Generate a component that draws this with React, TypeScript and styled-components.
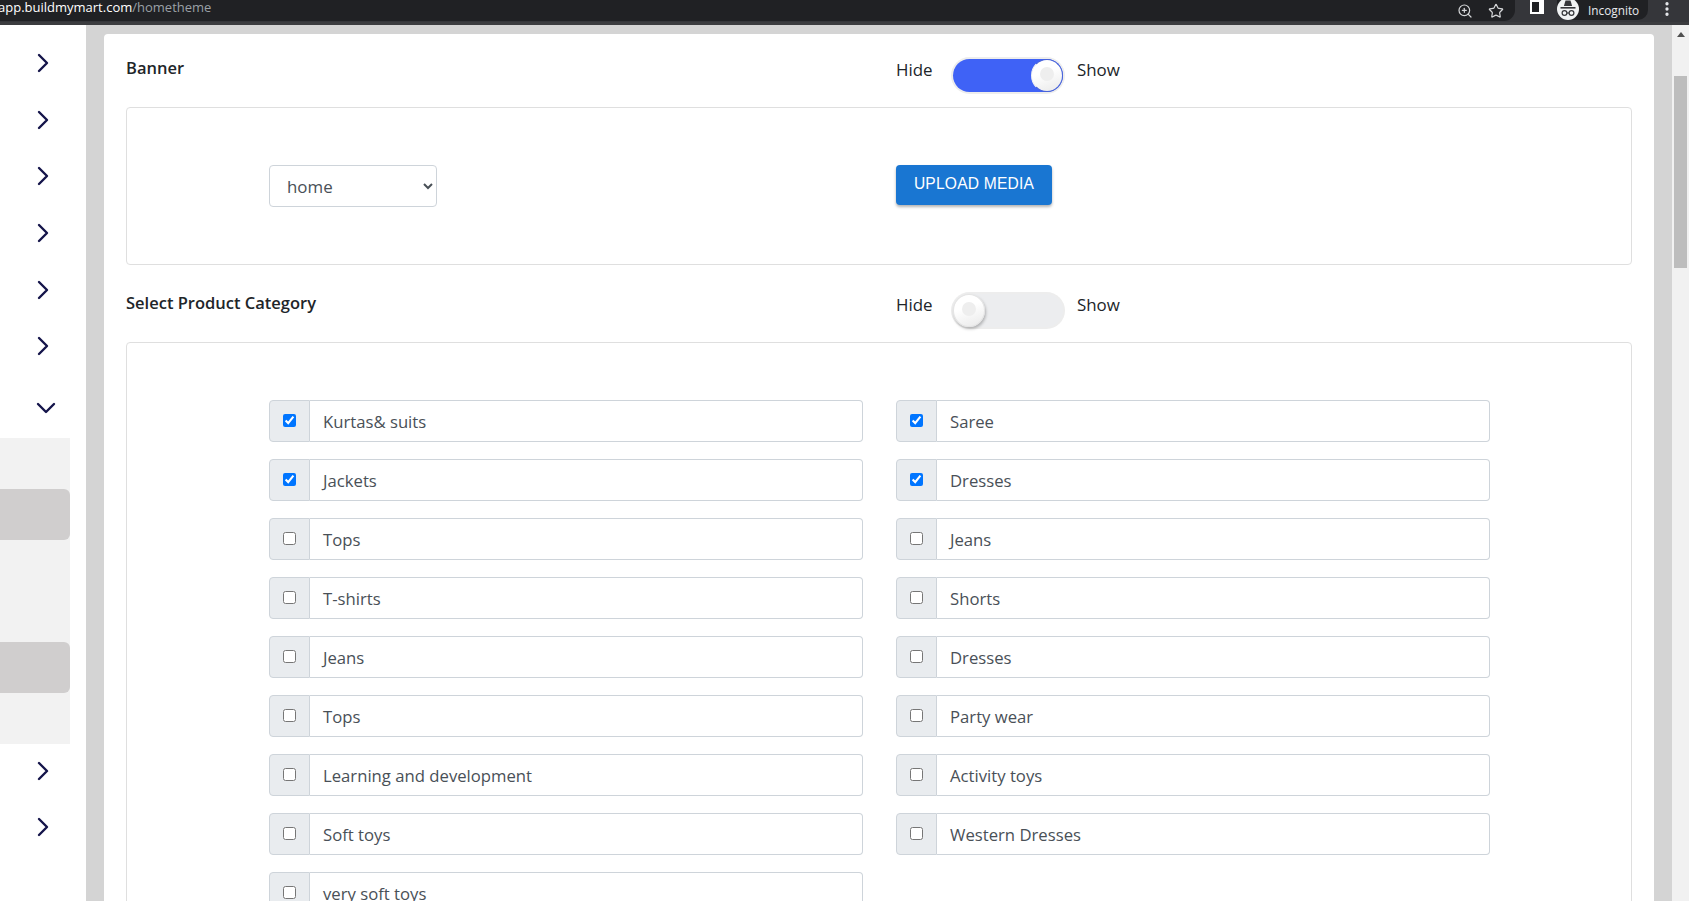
import React from "react";
import styled, { createGlobalStyle } from "styled-components";
import { ChevronRight, ChevronDown, ZoomIn, Star, MoreVertical } from "lucide-react";

const GlobalStyle = createGlobalStyle`
  html, body {
    margin: 0;
    padding: 0;
    height: 100%;
    overflow: hidden;
    background: #d4d4d4;
    font-family: "Open Sans", "Noto Sans", sans-serif;
  }
  * {
    box-sizing: border-box;
  }
`;

const categories: [string, boolean][] = [
  ["Kurtas& suits", true],
  ["Saree", true],
  ["Jackets", true],
  ["Dresses", true],
  ["Tops", false],
  ["Jeans", false],
  ["T-shirts", false],
  ["Shorts", false],
  ["Jeans", false],
  ["Dresses", false],
  ["Tops", false],
  ["Party wear", false],
  ["Learning and development", false],
  ["Activity toys", false],
  ["Soft toys", false],
  ["Western Dresses", false],
  ["very soft toys", false],
];

const App = () => {
  return (
    <Page>
      <GlobalStyle />
      <BrowserBar>
        <Omnibox>
          <UrlText>
            app.buildmymart.com<UrlPath>/hometheme</UrlPath>
          </UrlText>
          <ZoomIn size={16} color="#d5d7d9" strokeWidth={1.8} />
          <Star size={16} color="#d5d7d9" strokeWidth={1.8} />
        </Omnibox>
        <PanelIcon />
        <IncognitoPill>
          <IncognitoBadge>
            <svg width="22" height="22" viewBox="0 0 22 22">
              <path d="M8.5 2.5h5l1.6 5.6H6.9z" fill="#35363a" />
              <rect x="3.5" y="9" width="15" height="1.6" fill="#35363a" />
              <circle cx="7.5" cy="15" r="2.4" fill="none" stroke="#35363a" strokeWidth="1.2" />
              <circle cx="14.5" cy="15" r="2.4" fill="none" stroke="#35363a" strokeWidth="1.2" />
              <path d="M9.9 15h2.2" stroke="#35363a" strokeWidth="1.2" />
            </svg>
          </IncognitoBadge>
          Incognito
        </IncognitoPill>
        <MenuDots>
          <MoreVertical size={18} color="#e8eaed" strokeWidth={2.4} />
        </MenuDots>
      </BrowserBar>

      <Body>
        <Sidebar>
          {[0, 1, 2, 3, 4, 5].map((i) => (
            <NavItem key={i}>
              <ChevronRight size={32} color="#14144a" strokeWidth={1.8} />
            </NavItem>
          ))}
          <OpenNavItem>
            <ChevronDown size={32} color="#14144a" strokeWidth={1.8} />
          </OpenNavItem>
          <SubMenu>
            {[false, true, false, false, true, false].map((active, i) => (
              <SubItem key={i} $active={active} />
            ))}
          </SubMenu>
          {[0, 1].map((i) => (
            <LowerNavItem key={i}>
              <ChevronRight size={32} color="#14144a" strokeWidth={1.8} />
            </LowerNavItem>
          ))}
        </Sidebar>

        <Main>
          <Card>
            <SectionHeader>
              <SectionTitle>Banner</SectionTitle>
              <ToggleGroup>
                <ToggleLabel $wide>Hide</ToggleLabel>
                <Track $on>
                  <Knob $on />
                </Track>
                <ToggleLabel>Show</ToggleLabel>
              </ToggleGroup>
            </SectionHeader>
            <BannerBox>
              <TwoColumns>
                <PageSelect defaultValue="home">
                  <option value="home">home</option>
                </PageSelect>
                <div>
                  <UploadButton>UPLOAD MEDIA</UploadButton>
                </div>
              </TwoColumns>
            </BannerBox>

            <SectionHeader $next>
              <SectionTitle>Select Product Category</SectionTitle>
              <ToggleGroup>
                <ToggleLabel $wide>Hide</ToggleLabel>
                <Track>
                  <Knob />
                </Track>
                <ToggleLabel>Show</ToggleLabel>
              </ToggleGroup>
            </SectionHeader>
            <CategoryBox>
              <TwoColumns>
                {categories.map(([name, checked], i) => (
                  <CategoryRow key={i}>
                    <Addon>
                      <input type="checkbox" defaultChecked={checked} />
                    </Addon>
                    <CategoryName>{name}</CategoryName>
                  </CategoryRow>
                ))}
              </TwoColumns>
            </CategoryBox>
          </Card>
        </Main>

        <Scrollbar>
          <ScrollArrow />
          <ScrollThumb />
        </Scrollbar>
      </Body>
    </Page>
  );
};

const Page = styled.div`
  display: flex;
  flex-direction: column;
  height: 901px;
  overflow: hidden;
`;

const BrowserBar = styled.div`
  flex: none;
  display: flex;
  align-items: flex-start;
  height: 25px;
  background: #35363a;
  border-bottom: 3px solid #3b3c3f;
  overflow: hidden;
`;

const Omnibox = styled.div`
  display: flex;
  align-items: center;
  gap: 15px;
  width: 1515px;
  height: 21px;
  padding-right: 11px;
  background: #202124;
  border-bottom-right-radius: 11px;
`;

const UrlText = styled.div`
  flex: 1;
  margin-left: -2px;
  font-size: 13px;
  line-height: 15px;
  margin-top: -6px;
  color: #fff;
  white-space: nowrap;
`;

const UrlPath = styled.span`
  color: #9aa0a6;
`;

const PanelIcon = styled.div`
  width: 14px;
  height: 14px;
  margin: 0 0 0 15px;
  background: #202124;
  border: 2px solid #fff;
  border-right-width: 5px;
`;

const IncognitoPill = styled.div`
  display: flex;
  align-items: center;
  gap: 9px;
  width: 91px;
  height: 20px;
  margin-left: 13px;
  border-bottom-right-radius: 10px;
  border-bottom-left-radius: 10px;
  background: #202124;
  font-size: 11.8px;
  color: #e8eaed;
  white-space: nowrap;
`;

const IncognitoBadge = styled.div`
  display: flex;
  align-items: center;
  justify-content: center;
  width: 22px;
  height: 22px;
  border-radius: 50%;
  background: #f1f3f4;
  margin-top: -3px;
`;

const MenuDots = styled.div`
  margin-left: 10px;
  height: 18px;
`;

const Body = styled.div`
  flex: 1;
  display: flex;
  min-height: 0;
`;

const Sidebar = styled.nav`
  flex: none;
  width: 86px;
  padding-top: 10px;
  background: #fff;
`;

const NavItem = styled.div`
  display: flex;
  align-items: center;
  height: 56.6px;
  padding-left: 27px;
`;

const OpenNavItem = styled(NavItem)`
  height: 63.4px;
  padding-left: 30px;
  padding-top: 3px;
`;

const LowerNavItem = styled(NavItem)`
  padding-bottom: 3px;
`;

const SubMenu = styled.div`
  width: 70px;
  background: #f2f2f2;
`;

const SubItem = styled.div<{ $active?: boolean }>`
  height: 51px;
  background: ${(p) => (p.$active ? "#d0cece" : "transparent")};
  border-radius: 0 6px 6px 0;
`;

const Main = styled.main`
  flex: 1;
  min-width: 0;
  padding: 9px 18px 0;
  background: #d4d4d4;
`;

const Card = styled.div`
  padding: 25px 22px 0;
  background: #fff;
  border-radius: 4px 4px 0 0;
`;

const SectionHeader = styled.div<{ $next?: boolean }>`
  display: flex;
  height: 33px;
  margin-top: ${(p) => (p.$next ? "29px" : "0")};
  margin-bottom: 15px;
`;

const SectionTitle = styled.h2`
  width: 770px;
  margin: 0;
  font-size: 16.5px;
  font-weight: 600;
  line-height: 17px;
  color: #212529;
`;

const ToggleGroup = styled.div`
  display: flex;
  align-items: flex-start;
`;

const ToggleLabel = styled.span<{ $wide?: boolean }>`
  width: ${(p) => (p.$wide ? "57px" : "auto")};
  margin-left: ${(p) => (p.$wide ? "0" : "14px")};
  font-size: 16.9px;
  line-height: 21px;
  color: #212529;
`;

const Track = styled.div<{ $on?: boolean }>`
  display: flex;
  justify-content: ${(p) => (p.$on ? "flex-end" : "flex-start")};
  width: 110px;
  height: 33px;
  border-radius: 17px;
  background: ${(p) => (p.$on ? "#3f62f6" : "#ecedef")};
  box-shadow: 0 0 0 2px #ededed;
`;

const Knob = styled.div<{ $on?: boolean }>`
  position: relative;
  width: 32px;
  height: 33px;
  border-radius: 50%;
  background: linear-gradient(160deg, #ffffff 40%, #e9e9e9 100%);
  box-shadow: ${(p) => (p.$on ? "none" : "1px 2px 3px rgba(0, 0, 0, 0.25)")};
  border: ${(p) => (p.$on ? "1px solid #4a64d8" : "1px solid #e4e4e4")};
  border-left-color: ${(p) => (p.$on ? "#f2f2f2" : "#e4e4e4")};

  &::after {
    content: "";
    position: absolute;
    left: 8px;
    top: 7px;
    width: 14px;
    height: 14px;
    border-radius: 50%;
    background: #eeeeee;
  }
`;

const Box = styled.div`
  border: 1px solid #dfdfdf;
  border-radius: 4px;
  padding-left: 142px;
`;

const BannerBox = styled(Box)`
  height: 158px;
  padding-top: 57px;
`;

const CategoryBox = styled(Box)`
  padding-top: 57px;
  padding-bottom: 40px;
`;

const TwoColumns = styled.div`
  display: grid;
  grid-template-columns: 594px 594px;
  column-gap: 33px;
  row-gap: 17px;
`;

const PageSelect = styled.select`
  display: block;
  width: 168px;
  height: 42px;
  padding: 6px 13px;
  background: #fff;
  border: 1px solid #ced4da;
  border-radius: 4px;
  font-family: inherit;
  font-size: 16.9px;
  color: #495057;
`;

const UploadButton = styled.button`
  width: 156px;
  height: 40px;
  padding: 0 0 3px;
  border: 0;
  border-radius: 4px;
  background: #1976d2;
  box-shadow: 0 2px 3px rgba(0, 0, 0, 0.3);
  font-family: "Liberation Sans", Arial, sans-serif;
  font-size: 15.6px;
  letter-spacing: 0.2px;
  color: #fff;
`;

const CategoryRow = styled.div`
  display: flex;
  height: 42px;
`;

const Addon = styled.div`
  display: flex;
  align-items: center;
  justify-content: center;
  flex: none;
  width: 41px;
  padding-bottom: 2px;
  background: #e9ecef;
  border: 1px solid #ced4da;
  border-radius: 4px 0 0 4px;

  input {
    margin: 0;
  }
`;

const CategoryName = styled.div`
  flex: 1;
  padding: 0 13px;
  border: 1px solid #ced4da;
  border-left: 0;
  border-radius: 0 4px 4px 0;
  font-size: 16.7px;
  line-height: 41px;
  color: #495057;
`;

const Scrollbar = styled.div`
  flex: none;
  width: 17px;
  background: #f1f1f1;
`;

const ScrollArrow = styled.div`
  width: 0;
  height: 0;
  margin: 7px auto 39px;
  border-left: 4px solid transparent;
  border-right: 4px solid transparent;
  border-bottom: 5px solid #505050;
`;

const ScrollThumb = styled.div`
  width: 13px;
  height: 192px;
  margin: 0 auto;
  background: #bdbdbd;
`;

export default App;
